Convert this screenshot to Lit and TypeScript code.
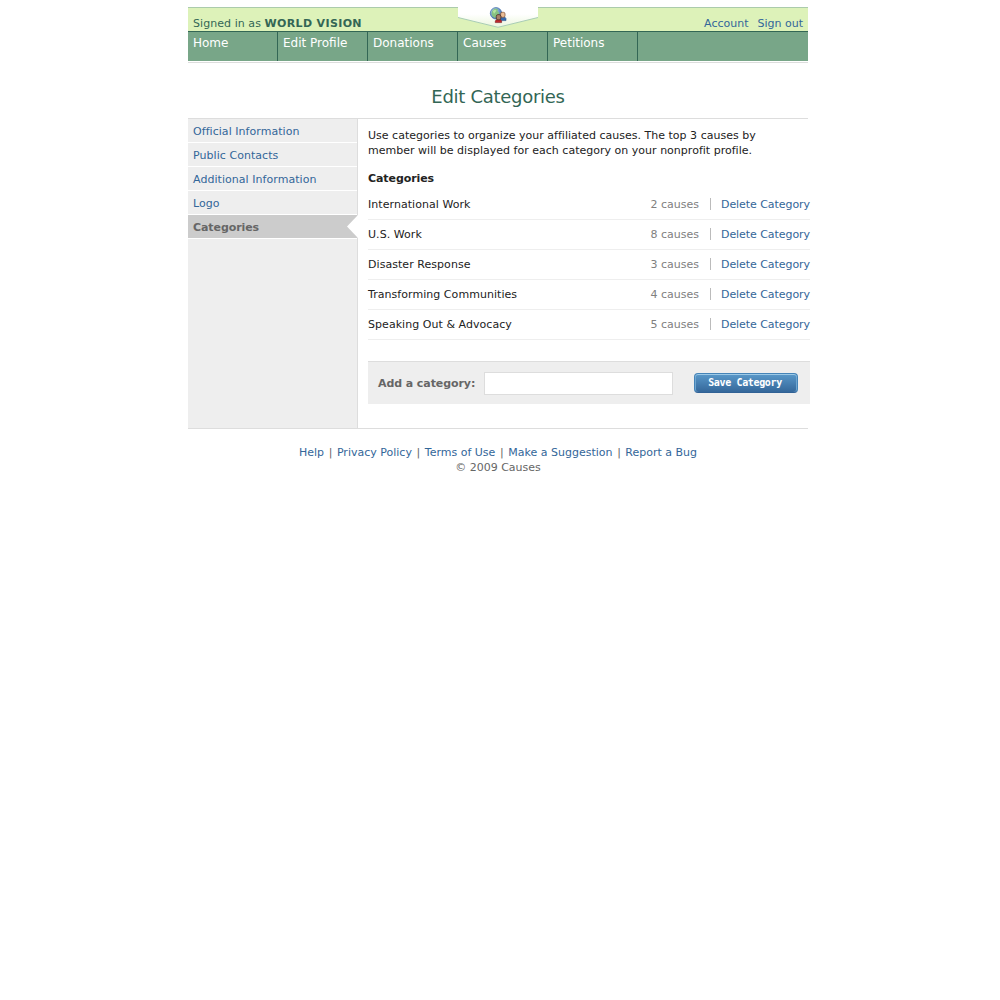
import { LitElement, html, css, svg } from "lit";
import { customElement, property } from "lit/decorators.js";

const NAV = ["Home", "Edit Profile", "Donations", "Causes", "Petitions"];
const SECTIONS = ["Official Information", "Public Contacts", "Additional Information", "Logo", "Categories"];
const CATEGORIES: [string, number][] = [
  ["International Work", 2],
  ["U.S. Work", 8],
  ["Disaster Response", 3],
  ["Transforming Communities", 4],
  ["Speaking Out & Advocacy", 5],
];
const FOOTER = ["Help", "Privacy Policy", "Terms of Use", "Make a Suggestion", "Report a Bug"];

const link = css`
  a { color: #336699; text-decoration: none; }
`;

@customElement("site-header")
class SiteHeader extends LitElement {
  static styles = [link, css`
    :host { display: block; border-bottom: 1px solid #dddddd; padding-bottom: 1px; }
    .account { position: relative; box-sizing: border-box; height: 24px; padding: 8px 5px 0; display: flex; justify-content: space-between; border-top: 1px solid #abcbac; background: #ddf2b9; color: #336655; line-height: 15px; }
    .who { letter-spacing: 0.06px; }
    .who b { letter-spacing: 0.36px; }
    .links { display: flex; gap: 9px; }
    .badge { position: absolute; left: 270px; top: -1px; width: 80px; height: 21px; display: block; }
    .nav { display: flex; height: 29px; border-top: 1px solid #336655; background: #78a688; }
    .tab { box-sizing: border-box; width: 90px; padding: 3px 5px 0; border-right: 1px solid #336655; color: #ffffff; font-size: 12px; line-height: 16px; }
  `];
  render() {
    return html`
      <div class="account">
        <span class="who">Signed in as <b>WORLD VISION</b></span>
        <span class="links"><a>Account</a><a>Sign out</a></span>
        <svg class="badge" viewBox="0 0 80 21">${svg`
          <defs>
            <linearGradient id="fade" x1="0" y1="0" x2="0" y2="1">
              <stop offset="0" stop-color="#fff"/><stop offset=".35" stop-color="#fff"/><stop offset="1" stop-color="#ebf6dc"/>
            </linearGradient>
            <radialGradient id="globe" cx=".35" cy=".3" r=".8">
              <stop offset="0" stop-color="#c4dcf2"/><stop offset=".55" stop-color="#6d98cc"/><stop offset="1" stop-color="#2b568f"/>
            </radialGradient>
          </defs>
          <path d="M0 0H80V10.500L40 20.500L0 10.500Z" fill="url(#fade)"/>
          <path d="M0 10.500L40 20.300L80 10.500" fill="none" stroke="#a9cdb5"/>
          <circle cx="38" cy="6.300" r="5.700" fill="url(#globe)" stroke="#4c76b0" stroke-width=".8"/>
          <path d="M34 4L36.500 1.500L40 2L39.500 4L41.500 6L39.500 9L37 11L34.500 9.500L33.500 7Z" fill="#86c182"/>
          <path d="M34.800 4L37 2.500L38.500 3.500L36 7Z" fill="#b5e5a0"/>
          <path d="M42 13.600V11.500L43 10.300H47L48 11.500V13.600Z" fill="#3469ad" stroke="#244f8b" stroke-width=".6"/>
          <rect x="42.600" y="5.300" width="4.400" height="5" rx="1.600" fill="#eabd96" stroke="#8a5a3e" stroke-width=".8"/>
          <path d="M37.300 15.600V14L38.300 12.800H42.600L43.600 14V15.600Z" fill="#c1272d" stroke="#761a1e" stroke-width=".6"/>
          <rect x="38.300" y="7.600" width="4.500" height="5.200" rx="1.700" fill="#a87f67" stroke="#513527" stroke-width=".8"/>
        `}</svg>
      </div>
      <div class="nav">${NAV.map((n) => html`<span class="tab">${n}</span>`)}</div>
    `;
  }
}

@customElement("section-menu")
class SectionMenu extends LitElement {
  @property() active = "Categories";
  static styles = [link, css`
    :host { display: block; box-sizing: border-box; width: 170px; background: #eeeeee; border-right: 1px solid #dddddd; }
    .item { display: flex; box-sizing: border-box; height: 24px; padding: 5px 0 0 5px; border-bottom: 1px solid #ffffff; line-height: 15px; letter-spacing: 0.05px; }
    .active { position: relative; background: #cccccc; color: #666666; font-weight: bold; letter-spacing: -0.08px; }
    .notch { position: absolute; right: -1px; top: 0; width: 11px; height: 23px; display: block; }
  `];
  render() {
    return SECTIONS.map((s) => s === this.active
      ? html`<div class="item active">${s}<svg class="notch" viewBox="0 0 11 23"><path d="M11 0V23L0 11.500Z" fill="#fff"/></svg></div>`
      : html`<div class="item"><a>${s}</a></div>`);
  }
}

@customElement("category-editor")
class CategoryEditor extends LitElement {
  static styles = [link, css`
    :host { display: block; width: 442px; margin: 9px -2px 24px 10px; flex: none; }
    .intro { line-height: 15px; white-space: nowrap; letter-spacing: 0.015px; }
    .heading { margin-top: 13px; line-height: 15px; font-weight: bold; letter-spacing: -0.08px; }
    .list { margin-top: 4px; }
    .row { display: flex; align-items: center; box-sizing: border-box; height: 30px; border-bottom: 1px solid #eeeeee; }
    .name { flex: 1; letter-spacing: 0.05px; }
    .count { color: #808080; }
    .rule { width: 1px; height: 12px; margin: -1px 10px 0 11px; background: #bbbbbb; }
    .delete { letter-spacing: -0.06px; }
    .form { display: flex; align-items: center; box-sizing: border-box; height: 43px; margin-top: 21px; padding: 0 12px 0 10px; border-top: 1px solid #dddddd; background: #eeeeee; }
    .label { width: 106px; color: #666666; font-weight: bold; white-space: nowrap; letter-spacing: -0.08px; }
    .field { box-sizing: border-box; width: 189px; height: 23px; margin: 0; padding: 2px 4px; border: 1px solid #dddddd; background: #ffffff; font: inherit; outline: none; }
    .save { box-sizing: border-box; width: 104px; height: 20px; margin: 0 0 0 auto; padding: 0 2px 0 0; border: 1px solid #4584b8; border-bottom-color: #316296; border-radius: 4px; background: linear-gradient(#5b9bcc, #336598) border-box; box-shadow: inset 0 1px #9cc9e6, inset 1px 0 #6fa6d0, inset -1px 0 #6fa6d0; color: #ffffff; font: bold 10px/18px "DejaVu Sans Mono", monospace; letter-spacing: -0.35px; text-align: center; white-space: nowrap; }
  `];
  render() {
    return html`
      <div class="intro">Use categories to organize your affiliated causes. The top 3 causes by<br>member will be displayed for each category on your nonprofit profile.</div>
      <div class="heading">Categories</div>
      <div class="list">${CATEGORIES.map(([name, n]) => html`
        <div class="row"><span class="name">${name}</span><span class="count">${n} causes</span><span class="rule"></span><a class="delete">Delete Category</a></div>`)}
      </div>
      <div class="form"><span class="label">Add a category:</span><input class="field" aria-label="Add a category"><button class="save">Save Category</button></div>
    `;
  }
}

@customElement("app-root")
class AppRoot extends LitElement {
  static styles = [link, css`
    :host { display: block; padding-top: 7px; color: #222222; background: #ffffff; font: 11px/15px Verdana, "DejaVu Sans", sans-serif; }
    .page { width: 620px; margin-left: 188px; }
    .title { margin: 22px 0 9px; text-align: center; color: #336655; font-size: 18px; line-height: 24px; font-weight: normal; letter-spacing: -0.28px; }
    .main { display: flex; border-top: 1px solid #dddddd; border-bottom: 1px solid #dddddd; }
    .footer { margin-top: 16px; text-align: center; color: #666666; }
    .bar { margin: 0 1px 0 1.2px; }
  `];
  render() {
    return html`<div class="page">
      <site-header></site-header>
      <h1 class="title">Edit Categories</h1>
      <div class="main"><section-menu></section-menu><category-editor></category-editor></div>
      <div class="footer">${FOOTER.map((f, i) => html`${i ? html` <span class="bar">|</span> ` : ""}<a>${f}</a>`)}<br>© 2009 Causes</div>
    </div>`;
  }
}
